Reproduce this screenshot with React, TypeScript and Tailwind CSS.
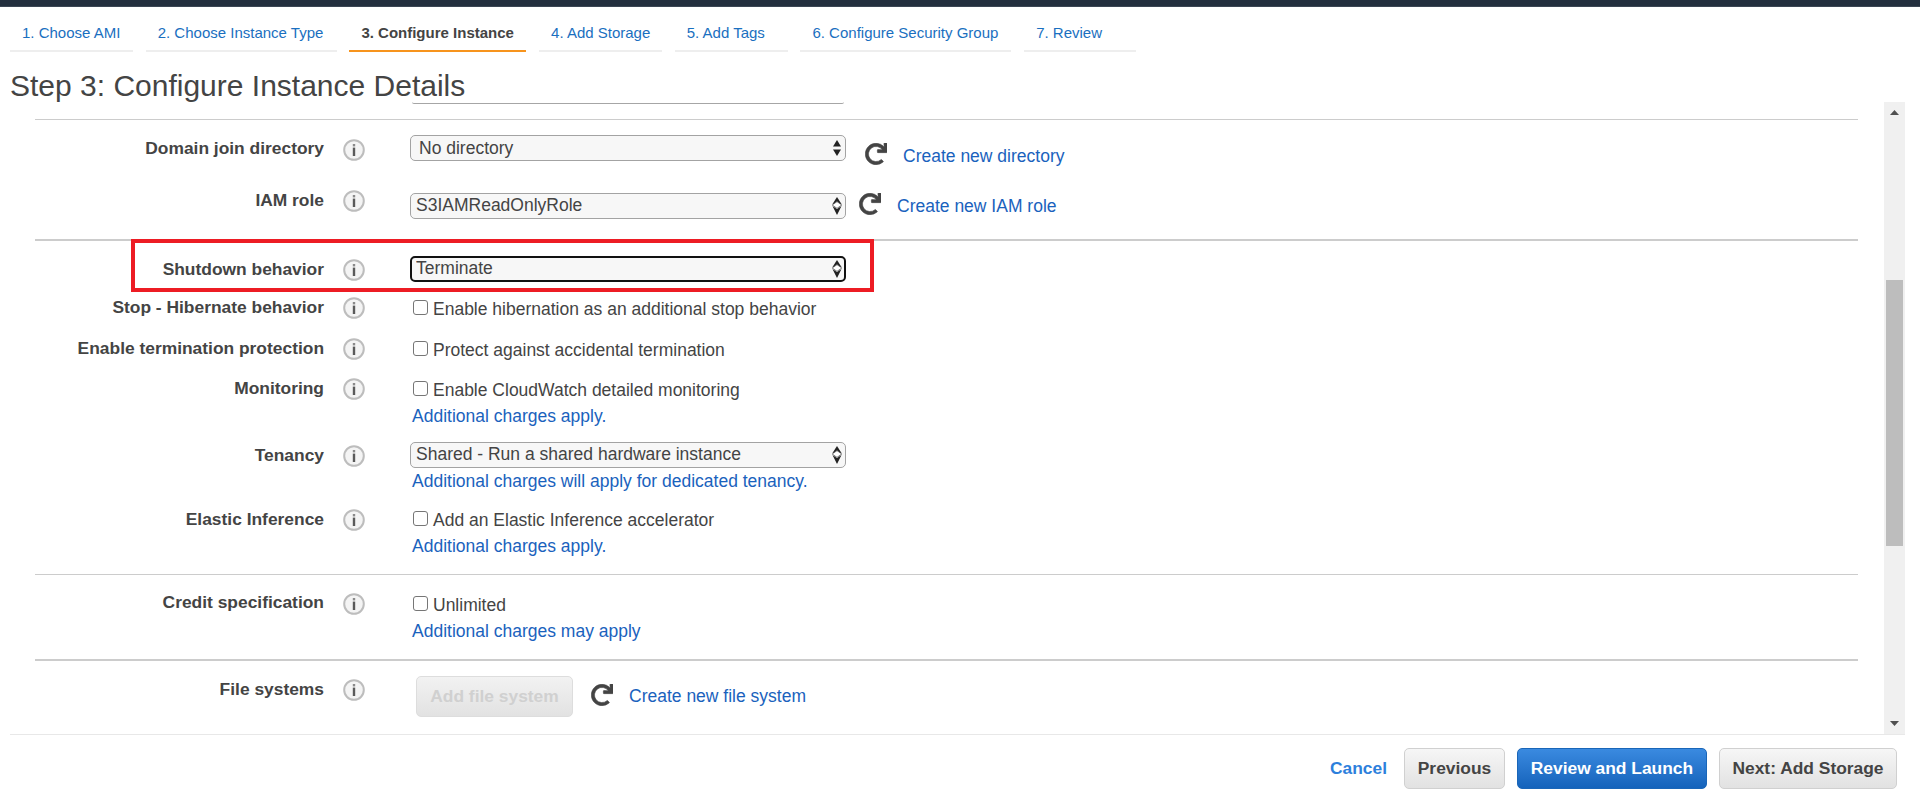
import { FaRedo } from "react-icons/fa";
import type { ReactNode } from "react";

const tabs = [
  { label: "1. Choose AMI", w: "w-[123px]" },
  { label: "2. Choose Instance Type", w: "w-[191px]" },
  { label: "3. Configure Instance", w: "w-[177px]", active: true },
  { label: "4. Add Storage", w: "w-[123px]" },
  { label: "5. Add Tags", w: "w-[113px]" },
  { label: "6. Configure Security Group", w: "w-[211px]" },
  { label: "7. Review", w: "w-[112px]" },
];

function Info({ className = "" }: { className?: string }) {
  return (
    <svg width="22" height="22" viewBox="0 0 22 22" className={`shrink-0 ${className}`}>
      <circle cx="11" cy="11" r="9.8" fill="#f4f4f4" stroke="#bdbdbd" strokeWidth="2" />
      <rect x="9.8" y="5" width="2.4" height="2.4" fill="#8a8a8a" />
      <rect x="9.8" y="8.6" width="2.4" height="8.4" fill="#5a5a5a" />
    </svg>
  );
}

function Arrows({ outlined }: { outlined?: boolean }) {
  return (
    <svg width="12" height="20" viewBox="0 0 12 20" className="absolute right-[3px] top-1/2 -translate-y-1/2 pointer-events-none">
      {outlined ? (
        <>
          <path d="M6 1 L10.5 8 L1.5 8 Z" fill="#222" />
          <path d="M1.5 10 L6 13 L10.5 10 L6 19 Z" fill="#222" />
          <path d="M1.2 9 L6 5.6 L10.8 9 L6 12.4 Z" fill="#fff" stroke="#555" strokeWidth="0.8" />
        </>
      ) : (
        <>
          <path d="M6 2 L10 8.5 L2 8.5 Z" fill="#222" />
          <path d="M2 11.5 L10 11.5 L6 18 Z" fill="#222" />
        </>
      )}
    </svg>
  );
}

function Select({ value, pad, focused, outlined }: { value: string; pad: string; focused?: boolean; outlined?: boolean }) {
  return (
    <div className="relative w-[436px] h-[26px] shrink-0">
      <select
        defaultValue={value}
        className={`appearance-none w-full h-full rounded-[5px] bg-[#f7f7f7] text-[#444] text-[17.5px] leading-none ${pad} ${
          focused ? "border-2 border-[#111]" : "border border-[#a3a3a3]"
        }`}
      >
        <option>{value}</option>
      </select>
      <Arrows outlined={outlined} />
    </div>
  );
}

function Check({ label }: { label: string }) {
  return (
    <label className="flex items-center h-[20px] text-[17.5px] text-[#444]">
      <span className="w-[15px] h-[15px] ml-[3px] mr-[5px] mb-[4px] rounded-[3px] border border-[#767676] bg-white shrink-0" />
      {label}
    </label>
  );
}

function LinkText({ children, className = "" }: { children: ReactNode; className?: string }) {
  return <a className={`text-[17.5px] leading-[20px] text-[#1a62bd] ${className}`}>{children}</a>;
}

function Refresh({ className }: { className: string }) {
  return <FaRedo className={`text-[#444] text-[22px] shrink-0 stroke-[#444] stroke-[14px] ${className}`} />;
}

function Row({
  label,
  height,
  labelTop,
  iconTop,
  children,
}: {
  label: string;
  height: string;
  labelTop: string;
  iconTop: string;
  children: ReactNode;
}) {
  return (
    <div className={`flex ${height}`}>
      <div className={`w-[289px] shrink-0 text-right font-bold text-[17.4px] leading-[20px] text-[#444] ${labelTop}`}>{label}</div>
      <Info className={`ml-[19px] ${iconTop}`} />
      <div className="ml-[45px] flex-1 min-w-0">{children}</div>
    </div>
  );
}

function Btn({ children, className }: { children: ReactNode; className: string }) {
  return (
    <button className={`h-[41px] rounded-[5px] font-bold text-[17.4px] ${className}`}>{children}</button>
  );
}

export default function App() {
  return (
    <div className="w-[1920px] h-[812px] bg-white flex flex-col overflow-hidden font-['Liberation_Sans',Arial,sans-serif]">
      <div className="h-[7px] bg-[#232f3e] border-b border-[#3b4654] shrink-0" />

      <nav className="flex gap-[12.7px] pl-[10px] mt-[13px] h-[32px] shrink-0">
        {tabs.map((t) => (
          <div
            key={t.label}
            className={`${t.w} h-[32px] pl-[12px] pt-[3px] text-[15px] leading-[20px] whitespace-nowrap border-b-2 ${
              t.active ? "border-[#f7941d] font-bold text-[#444]" : "border-[#eeeeee] text-[#1a6fc0]"
            }`}
          >
            {t.label}
          </div>
        ))}
      </nav>

      <h1 className="ml-[10px] mt-[15px] h-[35px] text-[30px] leading-[38px] text-[#444] font-normal shrink-0">
        Step 3: Configure Instance Details
      </h1>

      <div className="flex h-[633px] shrink-0 ml-[10px] mr-[15px] border-b border-[#e8e8e8]">
        <div className="flex-1 min-w-0 pl-[25px] pr-[26px]">
          <div className="ml-[377px] w-[432px] h-[2px] border-b border-[#a6a6a6] rounded-b-[3px]" />
          <div className="h-[16px] border-b border-[#cccccc]" />

          <Row label="Domain join directory" height="h-[58px]" labelTop="pt-[18px]" iconTop="mt-[19px]">
            <div className="flex pt-[15px]">
              <Select value="No directory" pad="pl-[8px] pt-[2px]" />
              <Refresh className="ml-[19px] mt-[8px]" />
              <LinkText className="ml-[16px] mt-[11px]">Create new directory</LinkText>
            </div>
          </Row>

          <Row label="IAM role" height="h-[61px]" labelTop="pt-[12px]" iconTop="mt-[12px]">
            <div className="flex pt-[15px]">
              <Select value="S3IAMReadOnlyRole" pad="pl-[5px]" outlined />
              <Refresh className="ml-[13px]" />
              <LinkText className="ml-[16px] mt-[3px]">Create new IAM role</LinkText>
            </div>
          </Row>

          <div className="h-[2px] bg-[#cccccc]" />

          <div className="relative">
            <Row label="Shutdown behavior" height="h-[51px]" labelTop="pt-[18px]" iconTop="mt-[18px]">
              <div className="pt-[15px]">
                <Select value="Terminate" pad="pl-[4px]" focused outlined />
              </div>
            </Row>
            <div className="absolute left-[96px] -top-[2px] w-[743px] h-[53px] border-4 border-[#ed1c24] pointer-events-none" />
          </div>

          <Row label="Stop - Hibernate behavior" height="h-[41px]" labelTop="pt-[5px]" iconTop="mt-[5px]">
            <div className="pt-[7px]">
              <Check label="Enable hibernation as an additional stop behavior" />
            </div>
          </Row>
          <Row label="Enable termination protection" height="h-[39px]" labelTop="pt-[5px]" iconTop="mt-[5px]">
            <div className="pt-[7px]">
              <Check label="Protect against accidental termination" />
            </div>
          </Row>
          <Row label="Monitoring" height="h-[70px]" labelTop="pt-[6px]" iconTop="mt-[6px]">
            <div className="pt-[8px]">
              <Check label="Enable CloudWatch detailed monitoring" />
              <LinkText className="block ml-[2px] mt-[6px]">Additional charges apply.</LinkText>
            </div>
          </Row>
          <Row label="Tenancy" height="h-[65px]" labelTop="pt-[3px]" iconTop="mt-[3px]">
            <Select value="Shared - Run a shared hardware instance" pad="pl-[5px]" outlined />
            <LinkText className="block ml-[2px] mt-[3px]">Additional charges will apply for dedicated tenancy.</LinkText>
          </Row>
          <Row label="Elastic Inference" height="h-[67px]" labelTop="pt-[2px]" iconTop="mt-[2px]">
            <div className="pt-[3px]">
              <Check label="Add an Elastic Inference accelerator" />
              <LinkText className="block ml-[2px] mt-[6px]">Additional charges apply.</LinkText>
            </div>
          </Row>

          <div className="h-px bg-[#cccccc]" />

          <Row label="Credit specification" height="h-[84px]" labelTop="pt-[17px]" iconTop="mt-[18px]">
            <div className="pt-[20px]">
              <Check label="Unlimited" />
              <LinkText className="block ml-[2px] mt-[6px]">Additional charges may apply</LinkText>
            </div>
          </Row>

          <div className="h-[2px] bg-[#cccccc]" />

          <Row label="File systems" height="h-[72px]" labelTop="pt-[18px]" iconTop="mt-[18px]">
            <div className="flex pt-[15px]">
              <button className="ml-[6px] w-[157px] h-[41px] rounded-[5px] font-bold text-[17.4px] text-[#d0d0d0] border border-[#dddddd] bg-gradient-to-b from-[#f2f2f2] to-[#e2e2e2] shrink-0">
                Add file system
              </button>
              <Refresh className="ml-[18px] mt-[8px]" />
              <LinkText className="ml-[16px] mt-[10px]">Create new file system</LinkText>
            </div>
          </Row>
        </div>

        <div className="relative w-[21px] h-full bg-[#f0f0f0] shrink-0">
          <svg width="21" height="12" viewBox="0 0 21 12" className="absolute top-[3px] left-0">
            <path d="M6 10 L10.5 5 L15 10 Z" fill="#505050" />
          </svg>
          <div className="absolute left-[2px] w-[17px] top-[178px] h-[266px] bg-[#bdbdbd]" />
          <svg width="21" height="12" viewBox="0 0 21 12" className="absolute bottom-[3px] left-0">
            <path d="M6 2 L15 2 L10.5 7 Z" fill="#505050" />
          </svg>
        </div>
      </div>

      <div className="flex items-center justify-end gap-[12px] pr-[23px] pt-[13px] shrink-0">
        <a className="font-bold text-[17.4px] text-[#2d7fdc] mr-[5px]">Cancel</a>
        <Btn className="w-[101px] text-[#444] border border-[#d0d0d0] bg-gradient-to-b from-[#f6f6f6] to-[#e2e2e2]">Previous</Btn>
        <Btn className="w-[190px] text-white border border-[#1a66b8] bg-gradient-to-b from-[#3a8ae0] to-[#1463bb]">Review and Launch</Btn>
        <Btn className="w-[178px] text-[#444] border border-[#d0d0d0] bg-gradient-to-b from-[#f6f6f6] to-[#e2e2e2]">Next: Add Storage</Btn>
      </div>
    </div>
  );
}
